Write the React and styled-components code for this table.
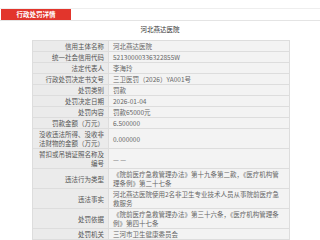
import React from "react";
import styled, { createGlobalStyle } from "styled-components";

const GlobalStyle = createGlobalStyle`
  html, body {
    margin: 0;
    padding: 0;
    background: #ffffff;
    font-family: "Noto Sans CJK SC", "Liberation Sans", sans-serif;
  }
`;

const Page = styled.div`
  width: 320px;
  padding-top: 8px;
`;

const HeaderBar = styled.div`
  display: flex;
  border-top: 1px solid #eeeeee;
  border-bottom: 1px solid #e4e4e4;
`;

const HeaderTab = styled.div`
  width: 70px;
  height: 11px;
  margin-left: 1px;
  background: #e2352c;
  color: #ffffff;
  font-size: 6.5px;
  font-weight: 700;
  line-height: 11px;
  text-align: center;
`;

const Title = styled.div`
  margin: 4px 0 6px;
  font-size: 6.5px;
  line-height: 9px;
  color: #333333;
  text-align: center;
`;

const Table = styled.table`
  margin-left: 32px;
  width: 258px;
  border-collapse: collapse;
  table-layout: fixed;
  border: 1px solid #d8d8d8;
  font-size: 6.5px;
  line-height: 9px;
`;

const Label = styled.td`
  width: 76px;
  box-sizing: border-box;
  padding: 1px 4px 0 3px;
  background: #ebebeb;
  color: #555555;
  text-align: right;
  vertical-align: middle;
  border: 1px solid #dddddd;
`;

const Value = styled.td`
  padding: 1px 4px 0;
  background: #f3f3f3;
  color: #666666;
  text-align: left;
  vertical-align: middle;
  border: 1px solid #dddddd;
  word-break: break-all;
`;

const rows = [
  ["信用主体名称", "河北燕达医院"],
  ["统一社会信用代码", "52130000336322855W"],
  ["法定代表人", "李海玲"],
  ["行政处罚决定书文号", "三卫医罚（2026）YA001号"],
  ["处罚类别", "罚款"],
  ["处罚决定日期", "2026-01-04"],
  ["处罚内容", "罚款65000元"],
  ["罚款金额（万元）", "6.500000"],
  ["没收违法所得、没收非法财物的金额（万元）", "0.000000"],
  ["暂扣或吊销证照名称及编号", "— —"],
  [
    "违法行为类型",
    "《院前医疗急救管理办法》第十九条第二款，《医疗机构管理条例》第二十七条",
  ],
  ["违法事实", "河北燕达医院使用2名非卫生专业技术人员从事院前医疗急救服务"],
  [
    "处罚依据",
    "《院前医疗急救管理办法》第三十六条，《医疗机构管理条例》第四十七条",
  ],
  ["处罚机关", "三河市卫生健康委员会"],
];

const App = () => {
  return (
    <Page>
      <GlobalStyle />
      <HeaderBar>
        <HeaderTab>行政处罚详情</HeaderTab>
      </HeaderBar>
      <Title>河北燕达医院</Title>
      <Table>
        <tbody>
          {rows.map(([label, value]) => (
            <tr key={label}>
              <Label>{label}</Label>
              <Value>{value}</Value>
            </tr>
          ))}
        </tbody>
      </Table>
    </Page>
  );
};

export default App;
